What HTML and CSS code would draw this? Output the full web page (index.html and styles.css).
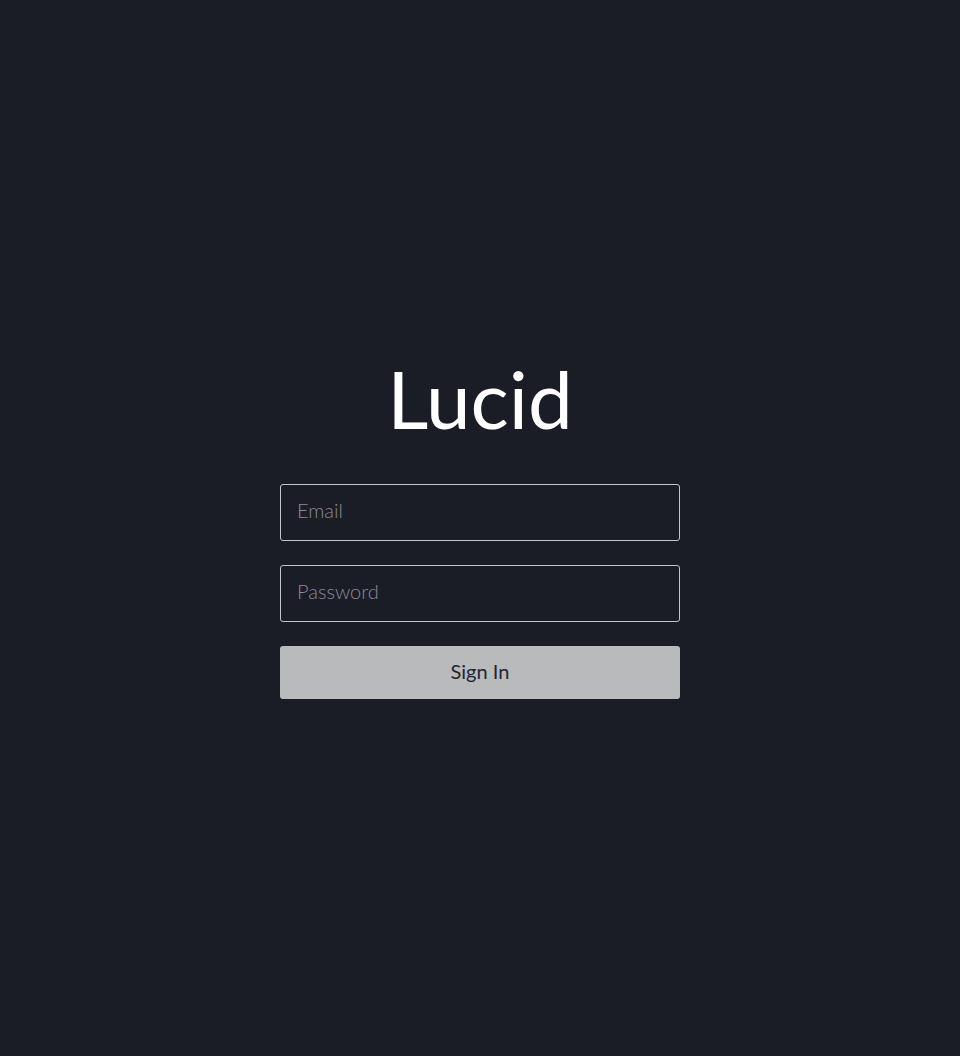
FILE: index.html
```html
<!DOCTYPE html>
<html lang="en">
<head>
<meta charset="utf-8">
<title>Lucid</title>
<link rel="stylesheet" href="styles.css">
</head>
<body>
<main class="page">
  <form class="login">
    <h1 class="brand">Lucid</h1>
    <input class="field" type="email" placeholder="Email">
    <input class="field" type="password" placeholder="Password">
    <button class="submit" type="button">Sign In</button>
  </form>
</main>
</body>
</html>
```
FILE: styles.css
```css
html, body {
  margin: 0;
  padding: 0;
  background: #1a1d26;
}
body {
  font-family: Lato, "Liberation Sans", sans-serif;
}
.page {
  min-height: 1056px;
  display: flex;
  align-items: center;
  justify-content: center;
}
.login {
  width: 400px;
  display: flex;
  flex-direction: column;
  gap: 24px;
  margin-top: -7px;
}
.brand {
  margin: 0 0 14px;
  text-align: center;
  color: #ffffff;
  font-weight: 400;
  font-size: 80px;
  line-height: 96px;
}
.field {
  box-sizing: border-box;
  height: 57px;
  width: 100%;
  padding: 0 16px 5px;
  background: transparent;
  border: 1px solid #c4c5c8;
  border-radius: 3px;
  color: #ffffff;
  font-family: Lato, "Liberation Sans", sans-serif;
  font-weight: 300;
  font-size: 20px;
  outline: none;
}
.field::placeholder {
  color: #8a8d94;
  opacity: 1;
}
.submit {
  box-sizing: border-box;
  height: 53px;
  width: 100%;
  padding: 0 0 4px;
  border: none;
  border-radius: 3px;
  background: #b9babc;
  color: #1e2533;
  font-family: Lato, "Liberation Sans", sans-serif;
  font-size: 20px;
  cursor: pointer;
}
```
